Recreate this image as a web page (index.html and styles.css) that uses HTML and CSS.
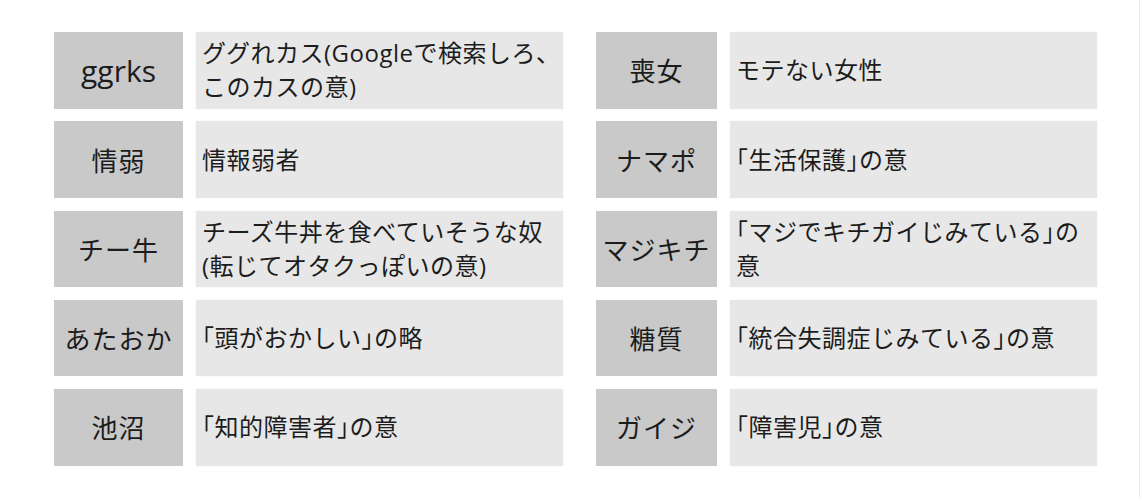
FILE: index.html
```html
<!DOCTYPE html>
<html lang="ja">
<head>
<meta charset="utf-8">
<title>ネットスラング</title>
<link rel="stylesheet" href="styles.css">
</head>
<body>
<div class="page">
  <div class="tables">
    <div class="glossary glossary-left">
      <div class="term"><span class="latin">ggrks</span></div>
      <div class="def">ググれカス(Googleで検索しろ、<br>このカスの意)</div>
      <div class="term">情弱</div>
      <div class="def">情報弱者</div>
      <div class="term">チー牛</div>
      <div class="def">チーズ牛丼を食べていそうな奴<br>(転じてオタクっぽいの意)</div>
      <div class="term">あたおか</div>
      <div class="def">「頭がおかしい」の略</div>
      <div class="term">池沼</div>
      <div class="def">「知的障害者」の意</div>
    </div>
    <div class="glossary glossary-right">
      <div class="term">喪女</div>
      <div class="def">モテない女性</div>
      <div class="term">ナマポ</div>
      <div class="def">「生活保護」の意</div>
      <div class="term">マジキチ</div>
      <div class="def">「マジでキチガイじみている」の<br>意</div>
      <div class="term">糖質</div>
      <div class="def">「統合失調症じみている」の意</div>
      <div class="term">ガイジ</div>
      <div class="def">「障害児」の意</div>
    </div>
  </div>
</div>
</body>
</html>
```

FILE: styles.css
```css
html, body {
  margin: 0;
  padding: 0;
  background: #ffffff;
}

body {
  font-family: "Open Sans", "Noto Sans CJK JP", sans-serif;
  color: #1c1c1c;
}

.page {
  width: 1139px;
  height: 498px;
  border-right: 1px solid #ececec;
  box-sizing: content-box;
}

.tables {
  display: flex;
  gap: 33px;
  padding: 32px 0 0 54px;
}

.glossary {
  display: grid;
  grid-auto-rows: 76.5px;
  row-gap: 12.75px;
  column-gap: 13px;
}

.glossary-left {
  grid-template-columns: 129px 367px;
}

.glossary-right {
  grid-template-columns: 121px 367px;
}

.term {
  background: #c9c9c9;
  display: flex;
  align-items: center;
  justify-content: center;
  font-size: 26px;
  letter-spacing: 1px;
  white-space: nowrap;
}

.term .latin {
  font-size: 30px;
  letter-spacing: 0;
}

.def {
  background: #e7e7e7;
  box-shadow: 0 0 2px rgba(0, 0, 0, 0.06);
  display: flex;
  align-items: center;
  padding: 0 4px 0 6px;
  font-size: 24px;
  line-height: 34px;
  letter-spacing: 0.5px;
  font-feature-settings: "halt";
}
```
